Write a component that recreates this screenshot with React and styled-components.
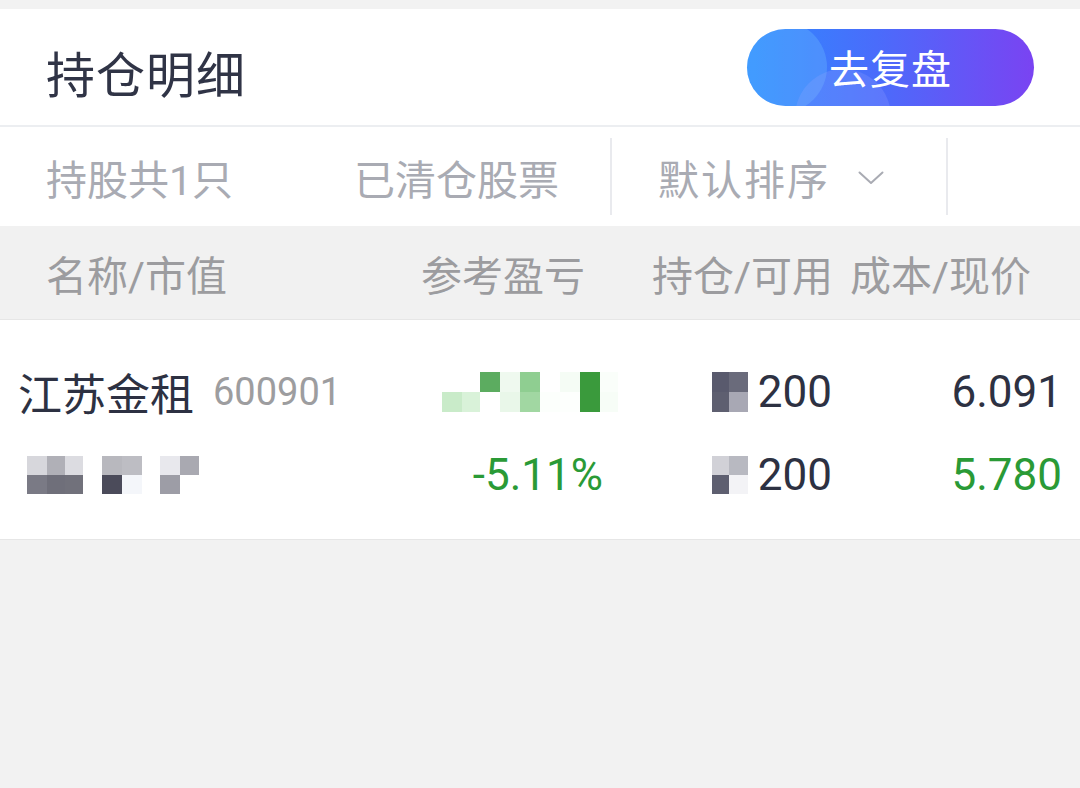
import React from 'react';
import styled, { createGlobalStyle } from 'styled-components';

const GlobalStyle = createGlobalStyle`
  html, body {
    margin: 0;
    padding: 0;
    background: #f2f2f2;
    font-family: Roboto, "Noto Sans CJK SC", "Noto Sans", sans-serif;
  }
`

const Page = styled.div`
  width: 1080px;
  min-height: 788px;
  padding-top: 9px;
  box-sizing: border-box;
  background: #f2f2f2;
`

const Header = styled.div`
  height: 116px;
  background: #ffffff;
  display: flex;
  align-items: center;
  justify-content: space-between;
  padding: 0 46px;
  border-bottom: 2px solid #eceef1;
`

const Title = styled.h1`
  margin: 0;
  margin-top: 8px;
  font-size: 49px;
  font-weight: 400;
  color: #303446;
  letter-spacing: 1px;
`

const ReviewButton = styled.button`
  position: relative;
  overflow: hidden;
  width: 287px;
  height: 77px;
  border: none;
  border-radius: 39px;
  background: linear-gradient(90deg, #2d8bff 0%, #4a6cfb 45%, #7a43f2 100%);
  color: #ffffff;
  font-family: "Noto Sans CJK SC", sans-serif;
  font-size: 40px;
  letter-spacing: 1px;
  display: flex;
  align-items: center;
  justify-content: center;
  padding: 0;

  &::before {
    content: '';
    position: absolute;
    left: -12px;
    top: -8px;
    width: 92px;
    height: 92px;
    border-radius: 50%;
    background: rgba(120, 200, 255, 0.28);
  }
  &::after {
    content: '';
    position: absolute;
    left: 48px;
    top: 40px;
    width: 96px;
    height: 96px;
    border-radius: 50%;
    background: rgba(160, 170, 255, 0.22);
  }

  & > span {
    position: relative;
    z-index: 1;
  }
`

const FilterBar = styled.div`
  height: 99px;
  background: #ffffff;
  display: flex;
  align-items: center;
`

const FilterSegment = styled.div`
  width: ${p => p.$width}px;
  height: 77px;
  box-sizing: border-box;
  display: flex;
  align-items: center;
  justify-content: ${p => p.$justify || 'flex-start'};
  padding: ${p => p.$padding || '0'};
  border-right: ${p => (p.$divider ? '2px solid #e9eaee' : 'none')};
`

const FilterText = styled.span`
  font-size: 41px;
  color: #a9abb3;
  letter-spacing: ${p => p.$spacing || 0}px;
  white-space: nowrap;
`

const Chevron = styled.svg`
  width: 26px;
  height: 14px;
  margin-left: ${p => p.$gap}px;
  margin-top: 2px;
`

const TableHead = styled.div`
  height: 93px;
  background: #f1f1f1;
  display: grid;
  grid-template-columns: 375px 231px 198px 1fr;
  align-items: center;
  padding-left: 46px;
  border-bottom: 1px solid #e6e6e6;
`

const HeadCell = styled.div`
  font-size: 41px;
  color: #9c9c9f;
  white-space: nowrap;
`

const Body = styled.div`
  background: #ffffff;
  padding: 30px 18px 23px;
  border-bottom: 1px solid #e6e6e6;
`

const Row = styled.div`
  display: grid;
  grid-template-columns: 385px 200px 229px 230px;
  height: 83px;
  align-items: center;
`

const Cell = styled.div`
  display: flex;
  align-items: center;
  justify-content: ${p => (p.$left ? 'flex-start' : 'flex-end')};
  white-space: nowrap;
`

const StockName = styled.span`
  font-size: 44px;
  color: #2d3142;
`

const StockCode = styled.span`
  font-size: 38px;
  color: #9d9d9f;
  margin-left: 19px;
`

const Num = styled.span`
  font-size: 44px;
  color: ${p => (p.$green ? '#2a9a36' : '#2d3142')};
`

const MosaicGrid = styled.div`
  display: grid;
  grid-template-columns: ${p => p.$cols};
  grid-auto-rows: ${p => p.$row}px;
  margin: ${p => p.$margin || '0'};
`

const Tile = styled.div`
  background: ${p => p.$c};
`

const Mosaic = ({ cols, row, rows, margin }) => (
  <MosaicGrid $cols={cols} $row={row} $margin={margin}>
    {rows.flat().map((c, i) => <Tile key={i} $c={c} />)}
  </MosaicGrid>
)

const W = '#ffffff';

const pnlRows = [
  [W, W, '#5cac60', '#eff9ef', '#8fce91', W, '#f5fcf5', '#3a9a3c', '#fafefa'],
  ['#c9ebc9', '#d9f2d9', W, '#e9f7e9', '#a1d7a2', '#fcfffc', '#fdfffd', '#3a9a3c', '#f7fdf7'],
];

const nameRows = [
  ['#d7d7dc', '#b0b0b7', '#dcdce1', W, '#b8b8be', '#bdbdc3', W, '#e8e8ed', '#a9a9b1'],
  ['#7a7a85', '#6f6f7a', '#71717b', W, '#4b4b5a', '#f4f6fa', W, '#9d9da6', W],
];

const hold1 = [
  ['#595a6d', '#6a6b7b'],
  ['#5e5f70', '#a8a8b4'],
];

const hold2 = [
  ['#d1d1d7', '#b8b9c1'],
  ['#5e5f70', '#f3f3f6'],
];

export default function App() {
  return (
    <Page>
      <GlobalStyle />
      <Header>
        <Title>持仓明细</Title>
        <ReviewButton><span>去复盘</span></ReviewButton>
      </Header>

      <FilterBar>
        <FilterSegment $width={612} $justify="space-between" $padding="0 51px 0 46px" $divider>
          <FilterText>持股共1只</FilterText>
          <FilterText>已清仓股票</FilterText>
        </FilterSegment>
        <FilterSegment $width={336} $padding="0 0 0 46px" $divider>
          <FilterText $spacing={2}>默认排序</FilterText>
          <Chevron $gap={28} viewBox="0 0 26 14" fill="none">
            <path d="M1.5 1.5 L13 12 L24.5 1.5" stroke="#a9abb3" strokeWidth="2" strokeLinecap="round" strokeLinejoin="round" />
          </Chevron>
        </FilterSegment>
      </FilterBar>

      <TableHead>
        <HeadCell>名称/市值</HeadCell>
        <HeadCell>参考盈亏</HeadCell>
        <HeadCell>持仓/可用</HeadCell>
        <HeadCell>成本/现价</HeadCell>
      </TableHead>

      <Body>
        <Row>
          <Cell $left>
            <StockName>江苏金租</StockName>
            <StockCode>600901</StockCode>
          </Cell>
          <Cell>
            <Mosaic cols="20px 18px 20px 20px 20px 20px 20px 20px 18px" row={20} rows={pnlRows} margin="0 -15px 0 0" />
          </Cell>
          <Cell>
            <Mosaic cols="17px 19px" row={20} rows={hold1} margin="0 10px 0 0" />
            <Num>200</Num>
          </Cell>
          <Cell>
            <Num>6.091</Num>
          </Cell>
        </Row>
        <Row>
          <Cell $left>
            <Mosaic cols="20px 18px 18px 19px 20px 20px 18px 20px 19px" row={19} rows={nameRows} margin="0 0 0 9px" />
          </Cell>
          <Cell>
            <Num $green>-5.11%</Num>
          </Cell>
          <Cell>
            <Mosaic cols="17px 19px" row={19} rows={hold2} margin="0 10px 0 0" />
            <Num>200</Num>
          </Cell>
          <Cell>
            <Num $green>5.780</Num>
          </Cell>
        </Row>
      </Body>
    </Page>
  );
}
